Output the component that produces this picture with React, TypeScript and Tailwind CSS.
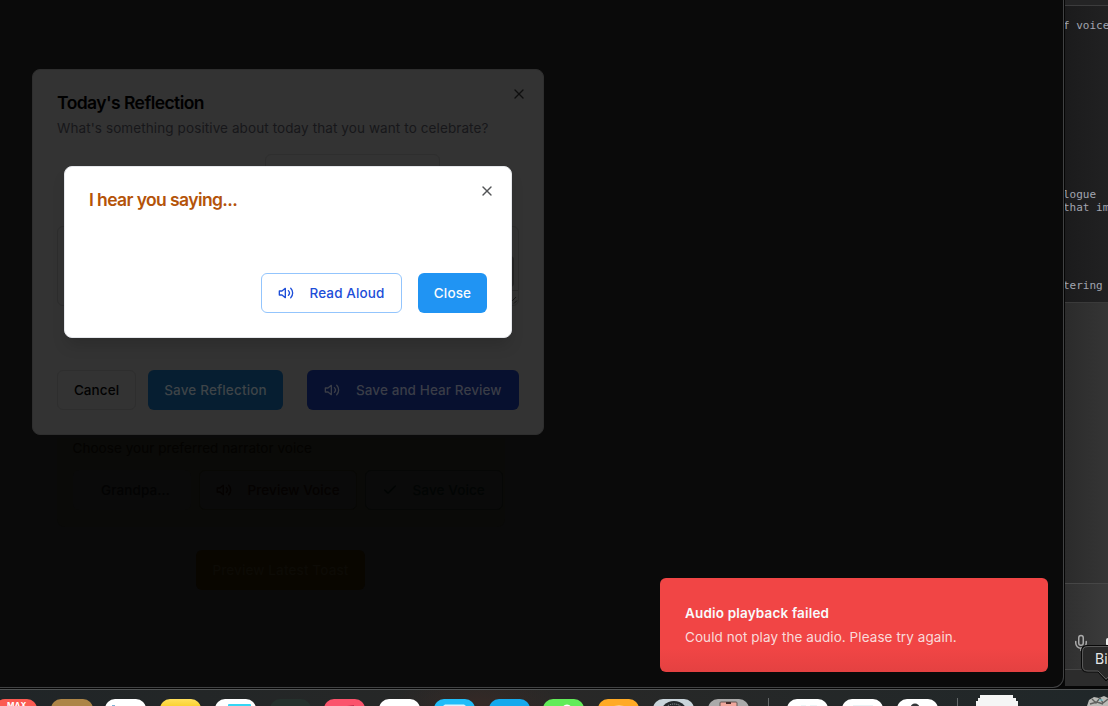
import React from "react";
import { Check, Mic, X } from "lucide-react";

function Speaker({ className = "" }: { className?: string }) {
  return (
    <svg
      viewBox="0 0 24 24"
      className={`h-4 w-4 shrink-0 ${className}`}
      fill="none"
      stroke="currentColor"
      strokeWidth="2"
      strokeLinecap="round"
      strokeLinejoin="round"
    >
      <polygon points="11 5 6 9 2 9 2 15 6 15 11 19 11 5" />
      <path d="M15.54 8.46a5 5 0 0 1 0 7.07" />
      <path d="M19.07 4.93a10 10 0 0 1 0 14.14" />
    </svg>
  );
}

function NarratorPage() {
  return (
    <div className="flex w-[512px] flex-col items-center pt-[438px] pl-[49px]">
      <div className="flex h-[89px] w-[448px] flex-col gap-3 rounded-b-lg bg-[#0a0a08] pl-4 text-[13.5px] font-medium text-[#030303]">
        <p className="h-5 whitespace-nowrap font-normal leading-5 tracking-[0.05px] text-[#040301]">Choose your preferred narrator voice</p>
        <div className="flex gap-2">
          <div className="flex h-10 w-[118px] items-center justify-center rounded-md bg-[#0a0a0a] pl-2 tracking-[0.1px]">Grandpa...</div>
          <div className="flex h-10 w-[158px] shrink-0 items-center gap-4 rounded-md border border-[#080805] bg-[#0a0a0a] pl-4 tracking-[0.09px] text-[#050201]">
            <Speaker />
            Preview Voice
          </div>
          <div className="flex h-10 w-[138px] shrink-0 items-center gap-[15px] rounded-md border border-[#060706] bg-[#0a0a0a] pl-4 tracking-[0.1px] text-[#020504]">
            <Check className="h-4 w-4" />
            Save Voice
          </div>
        </div>
      </div>
      <div className="mt-[23px] flex h-10 w-[169px] items-center justify-center rounded-md bg-[#090600] text-[13.5px] font-medium tracking-[0.12px] text-[#0d0b06]">
        Preview Latest Toast
      </div>
    </div>
  );
}

function ReflectionDialog() {
  return (
    <section className="absolute left-8 top-[69px] h-[366px] w-[512px] rounded-lg border border-[#2e2e2e] bg-[#333333] p-6">
      <header className="flex justify-between">
        <div>
          <h2 className="h-[18px] text-[17.5px] font-semibold leading-[18px] tracking-[-0.56px] text-black">Today's Reflection</h2>
          <p className="mt-1.5 whitespace-nowrap text-[13.5px] leading-5 tracking-[0.1px] text-[#17171a]">
            What's something positive about today that you want to celebrate?
          </p>
        </div>
        <X className="-mr-2 -mt-2 h-4 w-4 text-[#0f0f0f]" />
      </header>
      <div className="ml-[208px] mt-4 h-10 w-[175px] rounded-md border border-[#2e2e2e]" />
      <div className="mt-8 flex h-20 justify-end rounded-md border border-[#2d2d2d]">
        <div className="flex w-[10px] flex-col items-end justify-between">
          <div className="mr-1 mt-[29px] h-[31px] w-2 rounded-full bg-[#252525]" />
          <svg className="h-[15px] w-[10px]" viewBox="0 0 10 15" stroke="#171717" fill="none">
            <path d="M0 .5H10" stroke="#2a2a2a" />
            <path d="M2 13L8 7M6 13.5L9 10.5" />
          </svg>
        </div>
      </div>
      <footer className="mt-16 flex whitespace-nowrap text-[13.5px] font-medium">
        <div className="flex h-10 w-[79px] items-center justify-center rounded-md border border-[#2e2e2e] tracking-[0.07px] text-[#020202]">Cancel</div>
        <div className="ml-3 flex h-10 w-[135px] items-center justify-center rounded-md bg-[#061e31] tracking-[0.16px] text-[#3e4448]">Save Reflection</div>
        <div className="ml-6 flex h-10 w-[212px] items-center gap-4 rounded-md bg-[#07102f] pl-[17px] tracking-[0.09px] text-[#3a3d47]">
          <Speaker className="text-[#3a3d47]" />
          Save and Hear Review
        </div>
      </footer>
    </section>
  );
}

function HearDialog() {
  return (
    <section className="absolute left-16 top-[166px] flex h-[172px] w-[448px] flex-col justify-between rounded-lg border border-[#e5e7eb] bg-white p-6 shadow-[0_10px_15px_-3px_rgba(0,0,0,0.15)]">
      <header className="flex justify-between">
        <h2 className="text-[17.5px] font-semibold leading-[18px] tracking-[-0.6px] text-[#b45309]">I hear you saying...</h2>
        <X className="-mr-2 -mt-2 h-4 w-4 text-[#535557]" />
      </header>
      <footer className="flex justify-end gap-4 text-[13.5px] font-medium">
        <button className="flex h-10 w-[141px] items-center gap-[15.5px] rounded-md border border-[#93c5fd] pl-4 tracking-[0.12px] text-[#1d4ed8]">
          <Speaker />
          Read Aloud
        </button>
        <button className="h-10 w-[69px] rounded-md bg-[#2094f3] tracking-[0.15px] text-[#f8fafc]">Close</button>
      </footer>
    </section>
  );
}

function EditorWindow() {
  return (
    <div className="absolute left-[1065px] top-0 flex h-[686px] w-[43px] flex-col overflow-hidden bg-[#323232]">
      <div className="h-[5px] bg-[#242425]" />
      <div className="flex h-[297px] flex-col overflow-hidden whitespace-pre border-t border-[#3c3c3d] bg-gradient-to-r from-[#1b1b1c] to-[#212122] pt-[13px] font-['DejaVu_Sans_Mono',monospace] text-[11px] leading-[13px] text-[#a2a5b0]">
        <span className="-ml-[2px]">f voice</span>
        <span className="-ml-[2px] mt-[156px]">logue</span>
        <span className="-ml-[2px]">that im</span>
        <span className="-ml-[2px] mt-[65px]">tering</span>
      </div>
      <div className="h-[281px] border-t border-[#3a3a3a] bg-gradient-to-r from-[#2b2b2b] to-[#353535]" />
      <div className="flex h-[86px] justify-between border-t border-[#464646] bg-gradient-to-r from-[#303030] to-[#3b3b3b] pl-[7px] pt-[50px]">
        <Mic className="h-[18px] w-[18px] text-[#aaaaaa]" strokeWidth={2} />
        <span className="mt-1 h-2 w-[2px] rounded-l-full bg-[#eeeeee]" />
      </div>
      <div className="h-[17px] border-t border-[#454545] bg-[#2c2c2c]" />
    </div>
  );
}

function Dock() {
  return (
    <div className="absolute left-0 top-[689px] h-[17px] w-full overflow-hidden border-t border-[#505354] bg-gradient-to-r from-[#202527] via-[#282827] to-[#202729]">
      <svg className="block h-4 w-full" viewBox="0 690 1108 16">
        <defs>
          <radialGradient id="glow"><stop stopColor="#352926" /><stop offset="1" stopColor="#352926" stopOpacity="0" /></radialGradient>
          <linearGradient id="yellow" x2="0" y2="1"><stop stopColor="#ffe05e" /><stop offset=".3" stopColor="#f8ca14" /></linearGradient>
        </defs>
        <ellipse cx="480" cy="703" rx="85" ry="30" fill="url(#glow)" />
        <rect x="-5" y="699" width="42" height="40" rx="10" fill="#fb5b52" />
        <text x="7" y="708" fill="white" fontFamily="Inter, sans-serif" fontWeight="700" fontSize="8" letterSpacing="0">MAX</text>
        <rect x="51" y="699" width="42" height="40" rx="10" fill="#ad8547" />
        <rect x="105" y="699" width="41" height="40" rx="10" fill="#fff" />
        <path d="M112 705.5h3" stroke="#7eb0d5" />
        <rect x="160" y="699" width="41" height="40" rx="10" fill="url(#yellow)" />
        <rect x="215" y="699" width="41" height="40" rx="10" fill="#fff" />
        <rect x="228" y="704" width="23" height="8" rx="1" fill="#35d6f4" />
        <rect x="270" y="699" width="41" height="40" rx="10" fill="#25312d" />
        <rect x="324" y="699" width="41" height="40" rx="10" fill="#fb536c" />
        <path d="M347 706l7-1v1z" fill="#c1304b" />
        <rect x="379" y="699" width="41" height="40" rx="10" fill="#fff" />
        <rect x="434" y="699" width="41" height="40" rx="10" fill="#20bdf9" />
        <path d="M443 706l2-1.5h19l2 1.5z" fill="#d9f5ff" />
        <rect x="489" y="699" width="41" height="40" rx="10" fill="#15a9ed" />
        <rect x="543" y="699" width="41" height="40" rx="10" fill="#62ec59" />
        <ellipse cx="567" cy="708" rx="4" ry="3.5" fill="white" />
        <rect x="598" y="699" width="41" height="40" rx="10" fill="#ffaa25" />
        <path d="M614 706q5-1 10 0z" fill="#fff1d8" />
        <rect x="653" y="699" width="41" height="40" rx="10" fill="#cad5db" />
        <circle cx="674" cy="715" r="14" fill="#22282b" /><circle cx="674" cy="716" r="12" fill="none" stroke="#a0a8ab" strokeWidth="1" strokeDasharray="1 1" />
        <rect x="708" y="699" width="41" height="40" rx="10" fill="#aaa" />
        <rect x="720" y="702" width="17" height="8" rx="1" fill="#f0a79c" stroke="#635653" /><path d="M726 703h5" stroke="#462a28" strokeWidth="2" />
        <path d="M768.5 698v8M957.5 698v8" stroke="#65696a" />
        <rect x="787" y="699" width="41" height="40" rx="10" fill="#fff" />
        <path d="M801 706h5M810 706h7" stroke="#d9edf0" />
        <rect x="842" y="699" width="41" height="40" rx="10" fill="#fff" />
        <path d="M853 706h20" stroke="#d3e9ed" />
        <rect x="897" y="699" width="41" height="40" rx="10" fill="#fff" />
        <circle cx="915" cy="708" r="4.5" fill="#33383a" />
        <path d="M976 706v-5h2v-3h2v-3h33v3h3v3h2v5z" fill="#f5f5f5" />
        <path d="M1087 706l2-6 5-3 5 1 5-2 4 2v8z" fill="#b9bab6" />
        <path d="M1092 699l4 4 4-5 3 5 5-4M1090 704l7-2 6 2" fill="none" stroke="#5e605e" strokeWidth="1.4" />
        <path d="M1099 700h4" stroke="#78d8e5" />
      </svg>
    </div>
  );
}

export default function App() {
  return (
    <main className="relative h-[706px] w-[1108px] overflow-hidden bg-[#070707] font-['Inter',sans-serif]">
      <EditorWindow />
      <Dock />
      <div className="absolute left-0 top-0 h-[688px] w-[1064px] overflow-hidden rounded-br-[11px] border-b border-r border-[#414243] bg-[#0a0a0a] shadow-[0_0_0_1px_#050505]">
        <NarratorPage />
        <ReflectionDialog />
        <HearDialog />
        <aside className="absolute left-[660px] top-[578px] h-[94px] w-[388px] rounded-md bg-gradient-to-b from-[#f14545] from-75% to-[#e44141] px-[25px] pt-[25px] text-[13.5px] leading-5">
          <h3 className="font-semibold tracking-[0.17px] text-[#f8fafc]">Audio playback failed</h3>
          <p className="mt-1 tracking-[0.07px] text-[#f9dada]">Could not play the audio. Please try again.</p>
        </aside>
      </div>
      <div className="absolute left-[1081px] top-[645px] h-[40px] w-[27px] overflow-hidden">
        <svg className="absolute inset-0 h-[40px] w-[50px]" viewBox="0 0 50 40">
          <path d="M6 .5H50V27H34L25 36L17 27H6Q.5 27 .5 21V6Q.5.5 6 .5Z" fill="#292929" stroke="#080808" strokeWidth="1" />
          <path d="M50 1.5H7Q1.5 1.5 1.5 7V21Q1.5 26 7 26H17L25 34L34 26" fill="none" stroke="#595959" />
        </svg>
        <span className="relative block pl-[14px] pt-[4px] text-sm leading-5 text-[#e5e5e5]">Bi</span>
      </div>
    </main>
  );
}
